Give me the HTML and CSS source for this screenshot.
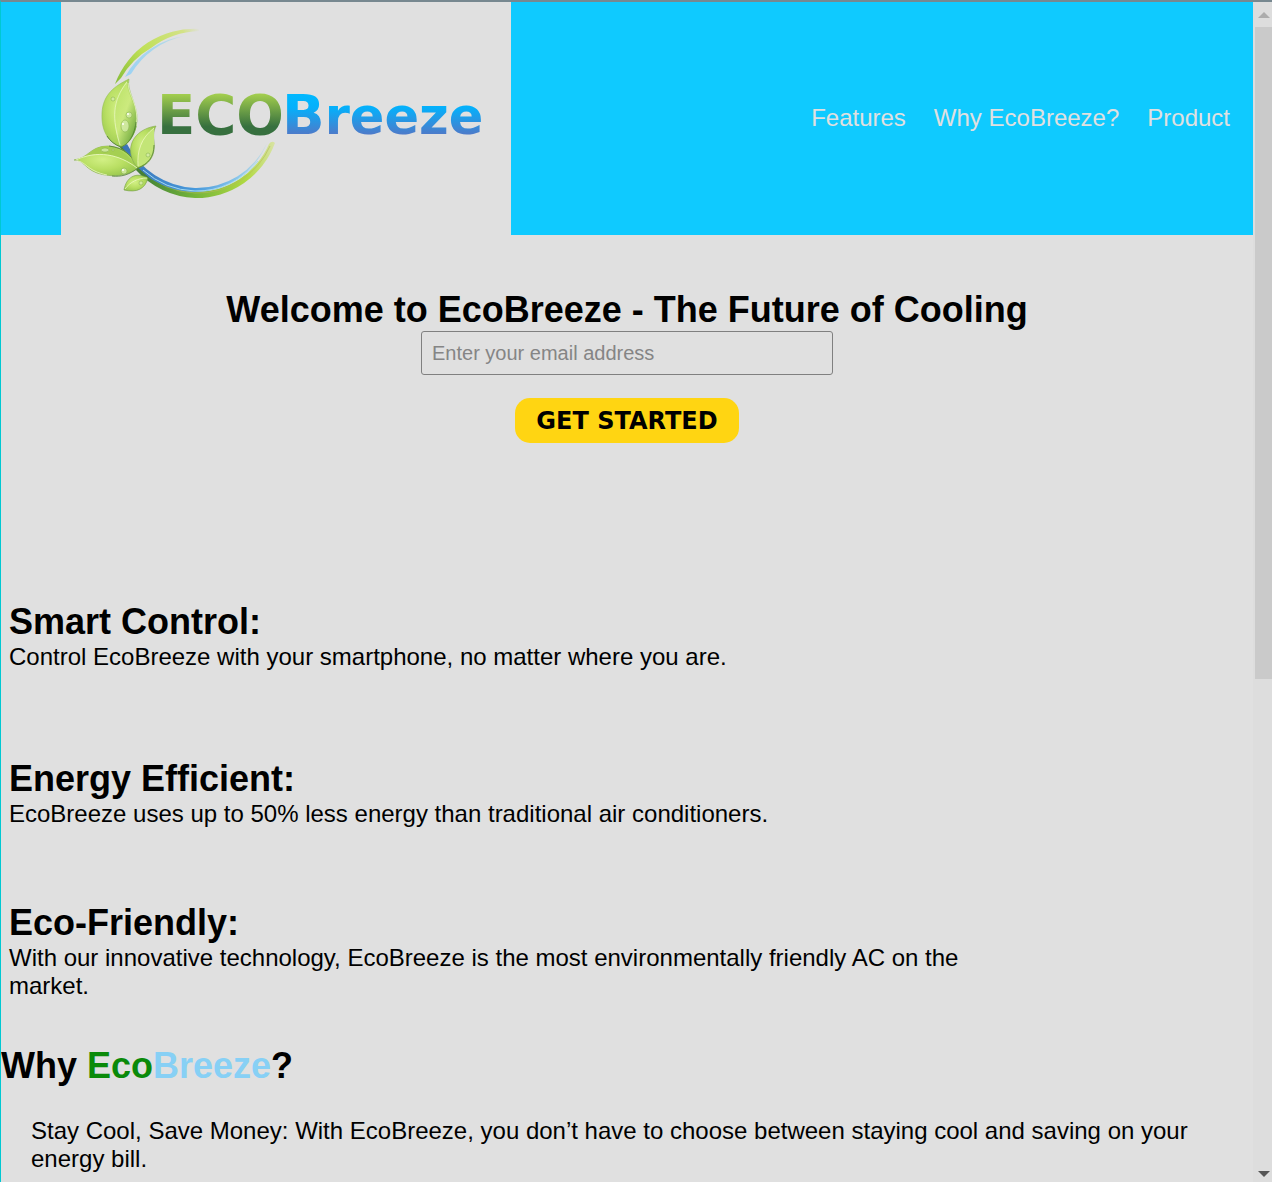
FILE: index.html
```html
<!DOCTYPE html>
<html lang="en">
<head>
<meta charset="utf-8">
<meta name="viewport" content="width=device-width, initial-scale=1">
<title>EcoBreeze</title>
<link rel="stylesheet" href="styles.css">
</head>
<body>
<div class="window">
  <div class="page">
    <header class="header">
      <svg class="logo" viewBox="61 2 450 233" role="img" aria-label="EcoBreeze logo">
        <defs>
          <linearGradient id="eco" x1="0" y1="93" x2="0" y2="135" gradientUnits="userSpaceOnUse">
            <stop offset="0" stop-color="#a6d14e"/><stop offset="0.8" stop-color="#37703f"/><stop offset="1" stop-color="#37703f"/>
          </linearGradient>
          <linearGradient id="breeze" x1="0" y1="93" x2="0" y2="135" gradientUnits="userSpaceOnUse">
            <stop offset="0" stop-color="#00b9ff"/><stop offset="0.35" stop-color="#05b0fb"/><stop offset="1" stop-color="#4f79c8"/>
          </linearGradient>
          <linearGradient id="arcTop" x1="115" y1="83" x2="200" y2="30" gradientUnits="userSpaceOnUse">
            <stop offset="0" stop-color="#86bd38"/><stop offset="0.4" stop-color="#bfe056"/><stop offset="0.85" stop-color="#d3e287"/><stop offset="1" stop-color="#e0e0e0"/>
          </linearGradient>
          <linearGradient id="blueTop" x1="125" y1="77" x2="186" y2="36" gradientUnits="userSpaceOnUse">
            <stop offset="0" stop-color="#9bd2f4"/><stop offset="0.7" stop-color="#add7ea"/><stop offset="1" stop-color="#cbdee5"/>
          </linearGradient>
          <linearGradient id="arcLow" x1="138" y1="0" x2="275" y2="0" gradientUnits="userSpaceOnUse">
            <stop offset="0" stop-color="#3f7d35"/><stop offset="0.4" stop-color="#72b33a"/><stop offset="0.8" stop-color="#b2da43"/><stop offset="1" stop-color="#d9e3a5"/>
          </linearGradient>
          <linearGradient id="blueLow" x1="122" y1="0" x2="267" y2="0" gradientUnits="userSpaceOnUse">
            <stop offset="0" stop-color="#3a72b5"/><stop offset="0.5" stop-color="#4799dc"/><stop offset="0.8" stop-color="#89c6ea"/><stop offset="1" stop-color="#cbdde3"/>
          </linearGradient>
          <radialGradient id="leaf" cx="0.45" cy="0.45" r="0.6">
            <stop offset="0" stop-color="#d2f085"/><stop offset="0.55" stop-color="#b9df63"/><stop offset="1" stop-color="#9ac850"/>
          </radialGradient>
          <linearGradient id="leafDark" x1="0" y1="0" x2="0.9" y2="1">
            <stop offset="0" stop-color="#b8e165"/><stop offset="0.5" stop-color="#ccea7e"/><stop offset="1" stop-color="#5e9d32"/>
          </linearGradient>
        </defs>
        <path d="M115 84A84 84 0 0 1 199 29V31A84 84 0 0 0 151 48A82 82 0 0 0 121 78Z" fill="url(#arcTop)"/>
        <path d="M125 77A79 79 0 0 1 185 36A80 80 0 0 0 131 74Z" fill="url(#blueTop)"/>
        <path d="M136 170A84 84 0 0 0 195 198A84 84 0 0 0 275 143Q272 140 269 144A79 79 0 0 1 195 192A80 80 0 0 1 138 166Z" fill="url(#arcLow)"/>
        <path d="M142 170A80 80 0 0 0 195 193A79 79 0 0 0 270 146" fill="none" stroke="#b8b85b" stroke-width="1" opacity="0.6"/>
        <path d="M121 147L127 144A80 80 0 0 0 195 188A78 78 0 0 0 267 143A78 78 0 0 1 195 192A86 86 0 0 1 121 147Z" fill="url(#blueLow)"/>
        <path d="M143 170A82 82 0 0 0 195 191A78 78 0 0 0 258 161" fill="none" stroke="#a4daef" stroke-width="1"/>
        <path d="M120 146L137 168L148 178" fill="none" stroke="#487f35" stroke-width="2"/>
        <!-- upper leaf -->
        <path d="M129 79C126 90 138 104 137 121C135 136 129 144 121 147C110 143 101 133 102 113C103 94 115 86 129 79Z" fill="url(#leaf)" stroke="#94bd54" stroke-width="0.6"/>
        <path d="M127 81C113 98 111 117 120 146C131 143 138 131 137 118C135 102 126 91 127 81Z" fill="url(#leafDark)"/>
        <path d="M127 82C112 101 112 119 120 145M128 83C128 95 140 106 136 126" fill="none" stroke="#eff9cd" stroke-width="0.7"/>
        <path d="M136 122C134 139 126 145 121 147C115 145 110 141 107 136" fill="none" stroke="#48782d" stroke-width="0.8"/>
        <!-- lower left leaf -->
        <path d="M74 160C89 158 90 146 108 146C124 147 132 155 138 168C128 176 112 178 97 173C84 168 84 160 74 160Z" fill="url(#leaf)" stroke="#83ad4a" stroke-width="0.6"/>
        <path d="M75 160C96 150 119 153 137 168C129 155 119 147 106 146C91 147 88 158 75 160Z" fill="#a5cf52"/>
        <path d="M76 160C97 150 119 154 137 168M77 161C85 161 87 171 107 175" fill="none" stroke="#effac9" stroke-width="0.8"/>
        <path d="M109 146C124 148 132 155 138 168C129 175 121 177 112 176" fill="none" stroke="#517e33" stroke-width="0.8"/>
        <!-- right leaf -->
        <path d="M156 126C141 128 128 139 131 155Q133 164 138 168C149 165 156 156 154 141C153 134 154 130 156 126Z" fill="url(#leaf)" stroke="#84a94d" stroke-width="0.6"/>
        <path d="M154 128C143 137 137 150 138 167C149 163 155 156 154 141Z" fill="#c3e577"/>
        <path d="M154 128C141 138 137 151 138 166" fill="none" stroke="#edf8bf" stroke-width="0.8"/>
        <path d="M154 145C154 157 148 164 138 168" fill="none" stroke="#517d35" stroke-width="0.8"/>
        <!-- small leaf -->
        <path d="M124 190C126 178 135 171 148 178C145 189 137 193 124 190Z" fill="url(#leaf)" stroke="#719c3f" stroke-width="0.6"/>
        <path d="M125 189C130 182 138 178 147 178" fill="none" stroke="#effac7" stroke-width="0.8"/>
        <g fill="#d6ecaa" fill-opacity="0.8" stroke="#81ad47" stroke-width="0.5">
          <ellipse cx="125" cy="126" rx="4" ry="6"/><circle cx="129" cy="115" r="3"/><circle cx="113" cy="99" r="2"/>
          <ellipse cx="105" cy="150" rx="4" ry="2"/><circle cx="113" cy="150" r="1"/><circle cx="124" cy="171" r="3"/><circle cx="148" cy="155" r="2"/><circle cx="141" cy="183" r="2"/>
        </g>
        <g fill="#fff"><circle cx="123" cy="124" r="1"/><circle cx="128" cy="114" r="1"/><circle cx="123" cy="170" r="1"/></g>
        <text class="logo-text" x="157" y="134" fill="url(#eco)">ECO</text>
        <text class="logo-text" x="282" y="134" fill="url(#breeze)">B<tspan class="logo-small">reeze</tspan></text>
      </svg>
      <nav class="nav" aria-label="Main">
        <a href="#features">Features</a>
        <a href="#why">Why EcoBreeze?</a>
        <a href="#product">Product</a>
      </nav>
    </header>
    <main>
      <section class="hero">
        <h1>Welcome to EcoBreeze - The Future of Cooling</h1>
        <form class="signup">
          <input class="email" type="email" placeholder="Enter your email address" aria-label="Email address">
          <button class="start" type="button">GET STARTED</button>
        </form>
      </section>
      <section class="features" id="features">
        <article class="feature feature-first">
          <h2>Smart Control:</h2>
          <p>Control EcoBreeze with your smartphone, no matter where you are.</p>
        </article>
        <article class="feature">
          <h2>Energy Efficient:</h2>
          <p>EcoBreeze uses up to 50% less energy than traditional air conditioners.</p>
        </article>
        <article class="feature">
          <h2>Eco-Friendly:</h2>
          <p>With our innovative technology, EcoBreeze is the most environmentally friendly AC on the market.</p>
        </article>
      </section>
      <section class="why" id="why">
        <h2>Why <span class="eco">Eco</span><span class="breeze">Breeze</span>?</h2>
        <p>Stay Cool, Save Money: With EcoBreeze, you don’t have to choose between staying cool and saving on your energy bill.</p>
      </section>
    </main>
  </div>
  <div class="scrollbar" aria-hidden="true">
    <span class="arrow arrow-up"></span>
    <span class="thumb"></span>
    <span class="arrow arrow-down"></span>
  </div>
</div>
</body>
</html>
```
FILE: styles.css
```css
* {
  box-sizing: border-box;
  margin: 0;
  padding: 0;
}

body {
  background: #e0e0e0;
  color: #000;
  font-family: "Liberation Sans", Arial, sans-serif;
  font-size: 24px;
  line-height: 28px;
}

.window {
  display: flex;
  height: 100vh;
  overflow: hidden;
  border-top: 2px solid #778890;
  border-left: 1px solid #00c8d2;
}

.page {
  flex: 1;
  min-width: 0;
}

.header {
  display: flex;
  justify-content: space-between;
  align-items: center;
  padding: 0 23px 0 60px;
  background: #0fcaff;
}

.logo {
  display: block;
  width: 450px;
  background: #e0e0e0;
}

.logo-text {
  font-family: "DejaVu Sans", sans-serif;
  font-size: 56px;
  font-weight: 700;
}

.logo-small {
  font-size: 51px;
}

.nav {
  display: flex;
  gap: 28px;
  padding-bottom: 2px;
}

.nav a {
  color: #e0e0e0;
  text-decoration: none;
}

h1,
h2 {
  padding-bottom: 2px;
  font-size: 36px;
  line-height: 39px;
}

.hero {
  padding-top: 55px;
  text-align: center;
}

.signup {
  display: flex;
  flex-direction: column;
  align-items: center;
  gap: 23px;
}

.email {
  width: 412px;
  height: 44px;
  padding: 0 10px;
  border: 1px solid #808080;
  border-radius: 3px;
  background: transparent;
  font: 20px "Liberation Sans", Arial, sans-serif;
}

.email::placeholder {
  color: #858585;
}

.start {
  height: 45px;
  padding: 0 21px;
  border: 0;
  border-radius: 15px;
  background: #ffd512;
  color: #000;
  font: 900 24px "Arial Black", "DejaVu Sans", sans-serif;
}

.features {
  width: 80%;
  padding: 159px 8px 0;
}

.feature {
  margin-bottom: 75px;
}

.feature-first {
  margin-bottom: 88px;
}

.feature:last-child {
  margin-bottom: 46px;
}

.why p {
  padding: 30px;
}

.eco {
  color: #0a8a0a;
}

.breeze {
  color: #87d0f5;
}

.scrollbar {
  display: flex;
  flex-direction: column;
  align-items: center;
  width: 19px;
  padding: 10px 0 5px 2px;
  background: #dddddd;
}

.arrow {
  border: 6px solid transparent;
}

.arrow-up {
  border-top: 0;
  border-bottom-color: #acacac;
  margin-bottom: 9px;
}

.thumb {
  width: 100%;
  height: 56%;
  background: #cacaca;
}

.arrow-down {
  margin-top: auto;
  border-bottom: 0;
  border-top-color: #555;
}
```
